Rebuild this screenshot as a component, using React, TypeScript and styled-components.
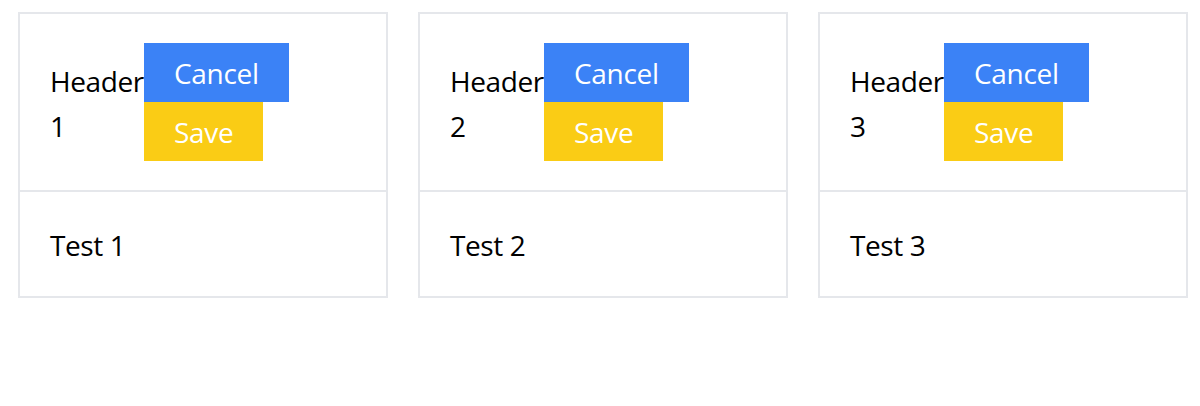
import React from "react";
import styled, { createGlobalStyle } from "styled-components";

const GlobalStyle = createGlobalStyle`
  html, body {
    margin: 0;
    padding: 0;
    background: #ffffff;
  }
  body {
    font-family: "Open Sans", "Noto Sans", sans-serif;
    color: #000000;
  }
`;

const Page = styled.div`
  display: grid;
  grid-template-columns: repeat(3, 370px);
  gap: 30px;
  padding: 12px 12px 0 18px;
  align-items: start;
`;

const Card = styled.div`
  border: 2px solid #e5e7eb;
  display: flex;
  flex-direction: column;
`;

const CardHeader = styled.div`
  display: flex;
  align-items: center;
  padding: 29px 30px 29px;
  border-bottom: 2px solid #e5e7eb;
`;

const Title = styled.div`
  width: 94px;
  flex: none;
  padding-top: 4px;
  font-size: 28px;
  line-height: 45px;
  letter-spacing: -0.4px;
`;

const Actions = styled.div`
  display: flex;
  flex-direction: column;
  align-items: flex-start;
`;

const Button = styled.button<{ $tone: "blue" | "yellow" }>`
  border: none;
  margin: 0;
  font-family: inherit;
  font-size: 28px;
  line-height: 45px;
  letter-spacing: -0.3px;
  padding: 8px 30px 6px;
  color: #ffffff;
  cursor: pointer;
  background: ${(p) => (p.$tone === "blue" ? "#3b82f6" : "#facc15")};
`;

const CardBody = styled.div`
  padding: 31px 30px 28px;
  font-size: 28px;
  line-height: 45px;
  letter-spacing: -0.4px;
`;

const items = [1, 2, 3];

export default function App() {
  return (
    <>
      <GlobalStyle />
      <Page>
        {items.map((n) => (
          <Card key={n}>
            <CardHeader>
              <Title>Header {n}</Title>
              <Actions>
                <Button $tone="blue">Cancel</Button>
                <Button $tone="yellow">Save</Button>
              </Actions>
            </CardHeader>
            <CardBody>Test {n}</CardBody>
          </Card>
        ))}
      </Page>
    </>
  );
}
